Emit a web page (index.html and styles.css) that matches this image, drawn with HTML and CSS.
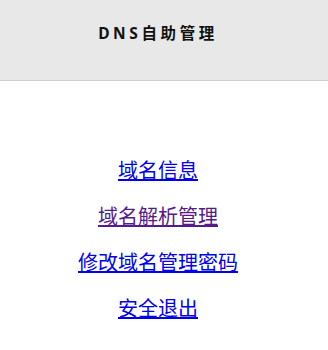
FILE: index.html
```html
<!DOCTYPE html>
<html lang="zh-CN">
<head>
<meta charset="utf-8">
<title>DNS自助管理</title>
<link rel="stylesheet" href="styles.css">
</head>
<body>
<header class="header">
  <h1 class="title">DNS自助管理</h1>
</header>
<nav class="menu">
  <a class="menu-link" href="#info">域名信息</a>
  <a class="menu-link menu-link--visited" href="#dns">域名解析管理</a>
  <a class="menu-link" href="#pwd">修改域名管理密码</a>
  <a class="menu-link" href="#logout">安全退出</a>
</nav>
</body>
</html>
```
FILE: styles.css
```css
html, body {
  margin: 0;
  padding: 0;
  background: #fff;
}
body {
  font-family: "Noto Sans", "Noto Sans CJK SC", sans-serif;
}
.header {
  background: #e8e8e8;
  border-bottom: 1px solid #cfcfcf;
  display: flex;
  justify-content: center;
  padding: 22px 12px 0 0;
  box-sizing: border-box;
  height: 81px;
}
.title {
  margin: 0;
  font-size: 15.5px;
  line-height: 22px;
  font-weight: 700;
  letter-spacing: 3.6px;
  color: #111;
  height: 22px;
}
.menu {
  display: flex;
  flex-direction: column;
  align-items: center;
  padding: 67px 12px 0 0;
}
.menu-link {
  display: block;
  font-size: 20px;
  line-height: 46px;
  color: #0000ee;
  text-decoration: underline;
}
.menu-link--visited {
  color: #551a8b;
}
```
